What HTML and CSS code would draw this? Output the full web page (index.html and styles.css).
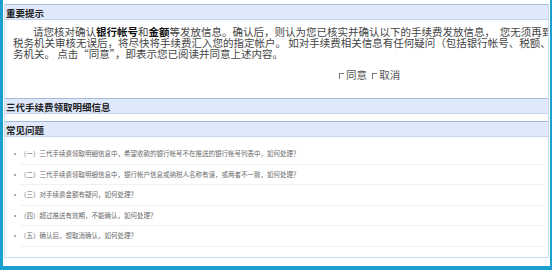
FILE: index.html
```html
<!DOCTYPE html>
<html lang="zh-CN">
<head>
  <meta charset="UTF-8" />
  <title>三代手续费</title>
  <link rel="stylesheet" href="styles.css">
</head>
<body>
  <div class="frame">
    <div class="box">
      <div class="bar first">重要提示</div>
      <p class="notice">
        <span class="line indent">请您核对确认<b>银行帐号</b>和<b>金额</b>等发放信息。确认后，则认为您已核实并确认以下的手续费发放信息，&nbsp;&nbsp;您无须再到</span>
        <span class="line">税务机关审核无误后，将尽快将手续费汇入您的指定帐户。 如对手续费相关信息有任何疑问（包括银行帐号、税额、等），请联系税</span>
        <span class="line">务机关。 点击“同意”，即表示您已阅读并同意上述内容。</span>
      </p>
      <div class="choices">
        <label><span class="chk"></span>同意</label>
        <label><span class="chk"></span>取消</label>
      </div>
      <div class="bar">三代手续费领取明细信息</div>
      <div class="bar faq">常见问题</div>
      <ul class="faq-list">
        <li>（一）三代手续费领取明细信息中，希望收款的银行帐号不在推送的银行帐号列表中，如何处理？</li>
        <li>（二）三代手续费领取明细信息中，银行帐户信息或纳税人名称有误，或两者不一致，如何处理？</li>
        <li>（三）对手续费金额有疑问，如何处理？</li>
        <li>（四）超过推送有效期，不能确认，如何处理？</li>
        <li>（五）确认后，想取消确认，如何处理？</li>
      </ul>
    </div>
  </div>
</body>
</html>
```
FILE: styles.css
```css
body {
  margin: 0;
  background: #fff;
  font-family: "Noto Sans CJK SC", "Noto Sans", sans-serif;
  color: #444;
}
.frame {
  width: 552px;
  height: 270px;
  box-sizing: border-box;
  border-left: 3px solid #1a9fd0;
  border-right: 2px solid #1a9fd0;
  border-bottom: 4px solid #1a9fd0;
  padding: 4px 1px 0 1px;
  overflow: hidden;
}
.box {
  height: 254px;
  box-sizing: border-box;
  border: 1px solid #c8dcef;
  border-top: none;
  overflow: hidden;
}
.bar {
  height: 14px;
  line-height: 16px;
  padding-left: 1px;
  background: #dfe9fb;
  border-top: 1px solid #a6badb;
  border-bottom: 1px solid #c6d4ec;
  font-size: 9.5px;
  font-weight: bold;
  color: #222;
  margin-top: 17px;
}
.bar.first {
  margin-top: 0;
}
.bar.faq {
  margin-top: 7px;
}
.notice {
  margin: 6px 0 0;
  padding-left: 8px;
  font-size: 10.5px;
  line-height: 11px;
  white-space: nowrap;
  color: #444;
}
.notice .line {
  display: block;
}
.notice .indent {
  text-indent: 20px;
}
.notice b {
  color: #111;
}
.choices {
  margin-top: 10px;
  padding-left: 334px;
  font-size: 10.5px;
  line-height: 12px;
  color: #555;
}
.choices label {
  margin-right: 3px;
}
.chk {
  display: inline-block;
  width: 4px;
  height: 5px;
  border-top: 1px solid #777;
  border-left: 1px solid #777;
  margin-right: 2px;
  vertical-align: 0;
}
.faq-list {
  list-style: none;
  margin: 7px 4px 0 15px;
  padding: 0;
}
.faq-list li {
  height: 19.5px;
  line-height: 19.5px;
  border-bottom: 1px solid #f0f1f3;
  font-size: 6.5px;
  color: #6a6a6a;
  white-space: nowrap;
}
.faq-list li::before {
  content: "";
  display: inline-block;
  width: 2px;
  height: 2px;
  background: #aaa;
  margin-left: -6px;
  margin-right: 4px;
  vertical-align: middle;
}
```
